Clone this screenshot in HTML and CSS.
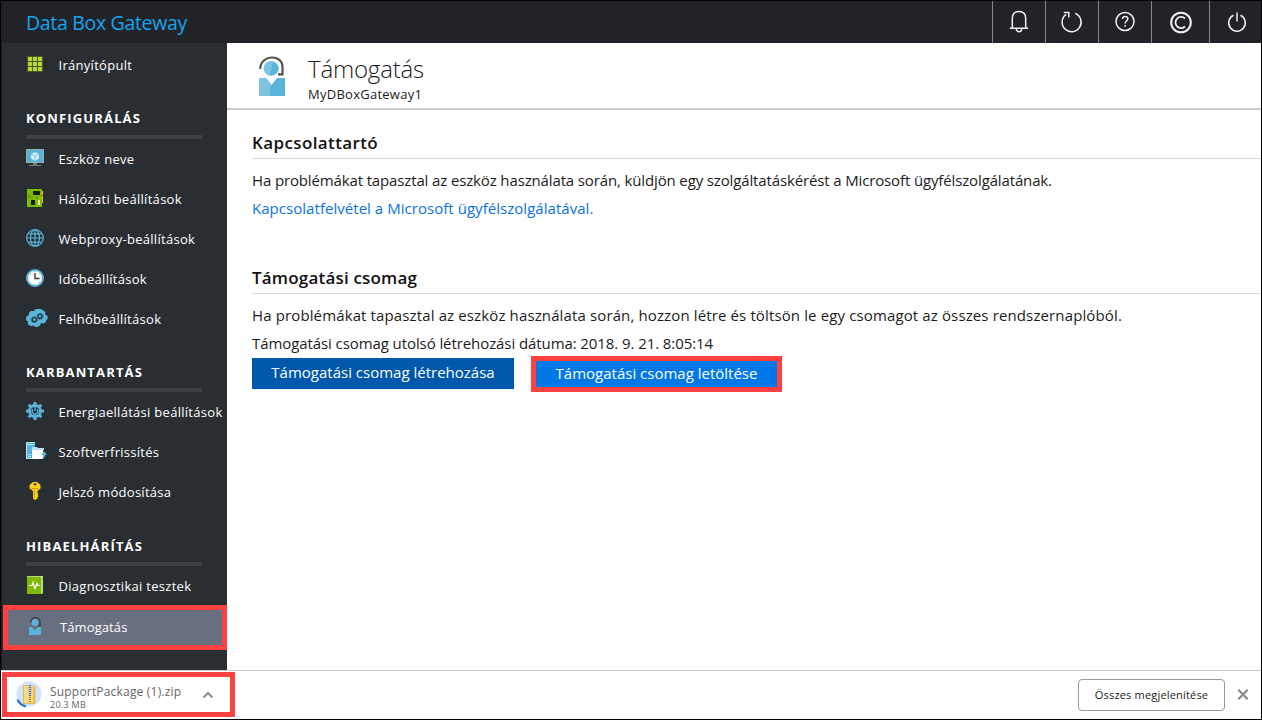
FILE: index.html
```html
<!DOCTYPE html>
<html lang="hu">
<head>
<meta charset="utf-8">
<title>Data Box Gateway</title>
<link rel="stylesheet" href="styles.css">
</head>
<body>
<div class="window">
  <header class="topbar">
    <div class="brand">Data Box Gateway</div>
    <div class="tools">
      <button class="tool"><svg width="20" height="24" viewBox="0 0 20 24"><path d="M3.300 18V8.500C3.300 4 6 1.500 10 1.500s6.700 2.500 6.700 7v9.500M.8 18.200h18.400M7.300 19a2.700 2.700 0 0 0 5.400 0"/></svg></button>
      <button class="tool"><svg width="22" height="24" viewBox="0 0 22 24"><path d="M14.200 3.400A9.500 9.500 0 1 1 5.200 4.400M2.800 2.500h5v5"/></svg></button>
      <button class="tool"><svg width="20" height="22" viewBox="0 0 20 22"><circle cx="10" cy="10.500" r="9"/><path d="M7.400 8.100c0-3.500 5.400-3.500 5.400-.4 0 2.200-2.700 2.300-2.700 4.700M10.100 14v1.700"/></svg></button>
      <button class="tool tool-wide"><svg width="24" height="24" viewBox="0 0 24 24"><circle cx="12" cy="12.500" r="9.800" stroke-width="2"/><path stroke-width="1.800" d="M16 8.500A5.600 5.600 0 1 0 16 16.500"/></svg></button>
      <button class="tool tool-last"><svg width="20" height="22" viewBox="0 0 20 22"><path d="M6.500 4.300A8.300 8.300 0 1 0 13.500 4.300M10 1.500v9"/></svg></button>
    </div>
  </header>
  <div class="middle">
    <nav class="sidebar">
      <a class="item"><svg class="ico" viewBox="0 0 22 20"><path fill="#4c5a2a" d="M1 1h16v16H1z"/><path fill="#bad52f" d="M2 2h4v4H2zM7 2h4v4H7zM12 2h4v4h-4zM2 7h4v4H2zM7 7h4v4H7zM12 7h4v4h-4zM2 12h4v4H2zM7 12h4v4H7zM12 12h4v4h-4z"/></svg>Irányítópult</a>
      <h3>KONFIGURÁLÁS</h3>
      <a class="item"><svg class="ico" viewBox="0 0 22 20"><path fill="#a4a7aa" d="M0 0h18v14H0z"/><path fill="#55b4dc" d="M1 1h16v12H1z"/><path fill="#7a7a7a" d="M7 14h4v2h4v1H3v-1h4z"/><path fill="#d9f1fa" d="M9 3l4 2v4.500L9 12 5 9.500V5z"/><path stroke="#55b4dc" stroke-width=".7" fill="none" d="M5 5l4 2 4-2M9 7v5"/></svg>Eszköz neve</a>
      <a class="item"><svg class="ico" viewBox="0 0 22 20"><path fill="#7fba00" d="M1 0h15v18H1z"/><path fill="#ffb900" d="M16 2h1v4h-1zM16 7h1v7h-1z"/><path fill="#10200b" d="M7 2h7v4H7zM5 11h4v5H5z"/><path fill="#ddecc0" d="M12 11h2v5h-2z"/><path stroke="#508000" d="M3 5v5M6 7v3M11 7v3" fill="none"/></svg>Hálózati beállítások</a>
      <a class="item"><svg class="ico" viewBox="0 0 22 20" fill="none" stroke="#59b4d9" stroke-width="1.200"><circle cx="9" cy="9" r="8.300"/><ellipse cx="9" cy="9" rx="4.500" ry="8.300"/><path d="M9 1v16M1 9h16M2.500 4.800h13M2.500 13.200h13"/></svg>Webproxy-beállítások</a>
      <a class="item"><svg class="ico" viewBox="0 0 22 20"><circle cx="9" cy="9" r="8" fill="#fff" stroke="#59b4d9" stroke-width="2"/><path d="M9 4v5.500h4.500" fill="none" stroke="#333" stroke-width="1.400"/><path d="M9 2v1M9 15v1M2.500 9h1M14.500 9h1M4 5l1 .5M13 5l1-.5M4 13l1-.5M13 13l1 .5" stroke="#999" stroke-width=".8"/></svg>Időbeállítások</a>
      <a class="item"><svg class="ico" viewBox="0 0 22 20"><path fill="#59b4d9" d="M3 6C2 3 5 1 7.500 2.500 9-.8 15-1 17 1.500c2 0 3 2 2 4 3 .5 4 4 1 6 .5 3-3 3.500-5 2.500-1 4-5 5.500-7.500 2.500C4 18 1 15.500 2 12.500-1 11.500-.5 7 3 6z"/><g fill="none" stroke="#26343c"><circle cx="8.300" cy="10.700" r="2" stroke-width="1.300"/><circle cx="8.300" cy="10.700" r="3" stroke-dasharray="1.180 1.180"/><circle cx="14" cy="7.300" r="2" stroke-width="1.300"/><circle cx="14" cy="7.300" r="3" stroke-dasharray="1.180 1.180"/></g></svg>Felhőbeállítások</a>
      <h3 class="maintenance">KARBANTARTÁS</h3>
      <a class="item"><svg class="ico" viewBox="0 0 22 20" fill="none" stroke="#59b4d9"><circle cx="9" cy="9" r="5.500" stroke-width="2.800"/><path stroke-width="3" d="M9 0v3M9 15v3M0 9h3M15 9h3M2.700 2.700l2 2M13.300 13.300l2 2M2.700 15.300l2-2M13.300 4.700l2-2"/><path stroke-width="1.300" d="M7 7.200a2.800 2.800 0 1 0 4 0M9 5v4"/></svg>Energiaellátási beállítások</a>
      <a class="item"><svg class="ico" viewBox="0 0 22 20"><path fill="#59b4d9" d="M0 0h9v17H0z"/><path fill="#b8e1f2" d="M0 0h9v1H0zM1 2h7v1H1zM2 12h3v1H2zM2 14h3v1H2zM0 16h6v1H0zM0 0h1v17H0zM6 5h5l1 1h6v2H6z"/><path fill="#fff" d="M6 8h11v9H6z"/><path fill="#59b4d9" d="M18 9l3 4h-2c0 2-1 4-3 4 1-1 1-2 1-4h-2z"/></svg>Szoftverfrissítés</a>
      <a class="item"><svg class="ico" viewBox="0 0 22 20"><path fill="#fcd116" fill-rule="evenodd" d="M7 0h4l3.500 3v3.500L11.500 9v2l1 1-1 1 1 1-1 1v1.500L9 18l-2-1.500V9L3.500 6.500V3zM9 1.200a1.500 1 0 1 0 .1 0z"/><path stroke="#d49b00" d="M8.500 8v8M5 6.500h8"/></svg>Jelszó módosítása</a>
      <h3 class="trouble">HIBAELHÁRÍTÁS</h3>
      <a class="item"><svg class="ico" viewBox="0 0 22 20"><path fill="#b8d98a" d="M1 0h16v17l-1 1H1z"/><path fill="#7fba00" d="M1 1h14v17H1z"/><path fill="none" stroke="#fff" stroke-width="1.200" d="M3 9.500h3l1-3 2 6 2-5 1 2h2"/></svg>Diagnosztikai tesztek</a>
      <a class="item active"><svg class="ico" viewBox="0 0 22 20"><path fill="none" stroke="#3c4149" stroke-width="1.500" d="M5 6C4.500-.5 13.500-1 14 5v4h-2"/><circle cx="9" cy="5.500" r="3.500" fill="#59b4d9"/><path fill="#59b4d9" d="M3 10h3l3 3 3-3h3v8H3z"/></svg>Támogatás</a>
    </nav>
    <main class="content">
      <div class="page-head">
        <svg width="28" height="42" viewBox="0 0 28 42"><path fill="none" stroke="#505050" stroke-width="2.200" d="M2.200 13C2.500-2 24.500-2 24.500 11v7.300H20"/><circle cx="13.500" cy="12.500" r="7.200" fill="#59b4d9"/><path fill="#7cc4e1" d="M15 5.500a7.200 7.200 0 1 0-3 14z"/><path fill="#59b4d9" d="M1 22h7l5.500 7 5.500-7h8v18H1z"/><path fill="#7cc4e1" d="M1 22h7l5 7-1 11H1z"/></svg>
        <div class="titles"><h1>Támogatás</h1><p>MyDBoxGateway1</p></div>
      </div>
      <section class="contact">
        <h2>Kapcsolattartó</h2>
        <p class="line intro">Ha problémákat tapasztal az eszköz használata során, küldjön egy szolgáltatáskérést a Microsoft ügyfélszolgálatának.</p>
        <p class="line link">Kapcsolatfelvétel a Microsoft ügyfélszolgálatával.</p>
      </section>
      <section class="package">
        <h2>Támogatási csomag</h2>
        <p class="line intro">Ha problémákat tapasztal az eszköz használata során, hozzon létre és töltsön le egy csomagot az összes rendszernaplóból.</p>
        <p class="line created">Támogatási csomag utolsó létrehozási dátuma: 2018. 9. 21. 8:05:14</p>
        <div class="actions"><button class="create">Támogatási csomag létrehozása</button><button class="download">Támogatási csomag letöltése</button></div>
      </section>
    </main>
  </div>
  <footer class="shelf">
    <div class="file">
      <svg width="28" height="28" viewBox="0 0 28 28"><circle cx="14" cy="13" r="12.500" fill="#d3e3fd"/><path fill="#f7dc7e" stroke="#d9b04a" stroke-width=".8" d="M8.500 4.500h9l1 1h1.500v17H8.500z"/><path fill="#e9bd4c" d="M18 6h2v16h-2z"/><path fill="#c8c8c8" d="M13 4h4v9l-1 2h-2l-1-2z"/><path stroke="#555" stroke-width="1.500" stroke-dasharray="1 1" d="M15 4v17"/><path fill="none" stroke="#1a73e8" stroke-width="2" d="M2.500 18.500q2.500 5.500 8.500 7"/></svg>
      <div class="file-text"><p class="fname">SupportPackage (1).zip</p><p class="fsize">20.3 MB</p></div>
      <svg width="12" height="8" viewBox="0 0 12 8"><path fill="none" stroke="#8a8a8a" stroke-width="2" d="M1.500 6.500L6 2l4.500 4.500"/></svg>
    </div>
    <div class="shelf-right"><button class="all">Összes megjelenítése</button><svg width="12" height="12" viewBox="0 0 12 12"><path stroke="#8a8a8a" stroke-width="2.200" d="M1.300 .8l9.400 9.400M10.700 .8l-9.400 9.400"/></svg></div>
  </footer>
</div>
</body>
</html>
```
FILE: styles.css
```css
* { box-sizing: border-box; }
body, h1, h2, h3, p { margin: 0; }
body { font-family: "Open Sans", "Noto Sans", sans-serif; color: #1c1c1c; }
button { font: inherit; border: 0; padding: 0; margin: 0; background: none; color: inherit; white-space: nowrap; }
svg { display: block; flex: none; }
.window { width: 1262px; height: 720px; border: 1px solid #000; display: flex; flex-direction: column; background: #fff; overflow: hidden; }

.topbar { height: 42px; flex: none; background: #212328; display: flex; justify-content: space-between; }
.brand { padding-left: 25px; font-size: 19.500px; letter-spacing: -.32px; line-height: 44px; color: #16a5ed; }
.tools { display: flex; }
.tool { width: 53px; border-left: 1px solid #85878a; display: flex; align-items: center; justify-content: center; }
.tool svg { fill: none; stroke: #f0f0f0; stroke-width: 1.500; }
.tool-wide { width: 58px; }
.tool-last { width: 52px; padding-left: 2px; }

.middle { flex: 1; min-height: 0; display: flex; }
.sidebar { width: 226px; flex: none; background: #292e32; border-left: 1px solid #1d1f24; padding-top: 2px; color: #fff; }
.item { height: 40px; display: flex; align-items: center; padding-left: 24px; gap: 10.500px; font-size: 13px; font-weight: 500; letter-spacing: .29px; white-space: nowrap; }
.ico { width: 22px; height: 20px; }
.sidebar h3 { height: 54px; margin-left: 24px; width: 176px; border-bottom: 4px solid #3c4145; padding-top: 22px; font-size: 13px; line-height: 22px; font-weight: 700; letter-spacing: 1.150px; }
.sidebar .maintenance { height: 53px; }
.sidebar .trouble { padding-top: 23px; }
.sidebar .active { height: 45px; margin-left: 1px; margin-top: -1px; padding: 0 0 2px 18px; gap: 12px; letter-spacing: .1px; border: 5px solid #ff4141; background: #686f81; }

.content { flex: 1; min-width: 0; }
.page-head { height: 67px; border-bottom: 2px solid #ccc; padding: 13px 0 0 31px; display: flex; gap: 22px; }
.titles { margin-top: -5px; }
h1 { font-size: 24px; line-height: 35px; font-weight: 300; letter-spacing: -.18px; }
.titles p { font-size: 13px; line-height: 16px; letter-spacing: .26px; }
.content section { padding-left: 25px; }
h2 { height: 29px; font-size: 17px; line-height: 26px; font-weight: 600; color: #111; border-bottom: 1px solid #d8d8d8; }
.contact { padding-top: 20px; height: 155px; }
.contact h2 { letter-spacing: .38px; }
.package h2 { letter-spacing: .19px; }
.line { font-size: 15px; line-height: 28px; white-space: nowrap; }
.contact .intro { margin-top: 7px; letter-spacing: -.136px; }
.link { color: #0b72e7; letter-spacing: .04px; }
.package .intro { margin-top: 7px; letter-spacing: .128px; }
.created { letter-spacing: -.085px; }
.actions { display: flex; gap: 17px; margin-top: -1px; }
.actions button { color: #fff; font-size: 15px; padding-bottom: 3px; }
.actions .create { width: 262px; height: 31px; margin-top: 2px; background: #0058ad; }
.actions .download { width: 251px; height: 36px; background: #0078e7; border: 5px solid #ff4141; }

.shelf { height: 49px; flex: none; border-top: 1px solid #ccc; display: flex; justify-content: space-between; }
.file { width: 233px; height: 45px; margin: 1px 0 0 1px; border: 5px solid #ff4141; display: flex; align-items: center; padding-left: 8px; gap: 7px; color: #666; }
.file-text { width: 145px; padding-top: 4px; }
.fname { font-size: 12px; line-height: 15px; letter-spacing: .19px; }
.fsize { font-size: 9px; line-height: 11px; letter-spacing: .28px; }
.shelf-right { display: flex; align-items: center; gap: 12px; padding-right: 12px; }
.all { width: 147px; height: 32px; border: 1px solid #999; border-radius: 4px; padding-bottom: 2px; font-size: 11px; letter-spacing: .18px; }
```
